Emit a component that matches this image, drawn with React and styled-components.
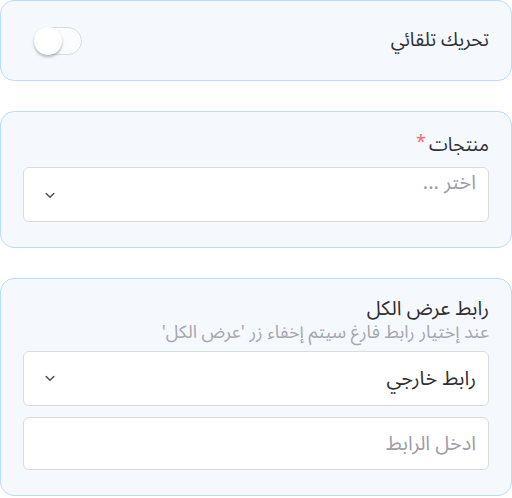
import React from "react";
import styled, { createGlobalStyle } from "styled-components";

const Global = createGlobalStyle`
  html, body { margin: 0; padding: 0; background: #ffffff; }
  body { font-family: "Noto Sans Arabic", "Noto Sans", sans-serif; }
`;

const Page = styled.div`
  direction: rtl;
  display: flex;
  flex-direction: column;
  gap: 30px;
  width: 512px;
`;

const Card = styled.section`
  background: #f5f9fe;
  border: 1px solid #bcdaf9;
  border-radius: 14px;
  padding: ${(p) => p.$pad || "20px 22px 25px"};
  display: flex;
  flex-direction: ${(p) => (p.$row ? "row" : "column")};
  align-items: ${(p) => (p.$row ? "center" : "stretch")};
  justify-content: space-between;
  height: ${(p) => p.$h || "auto"};
  box-sizing: border-box;
`;

const Label = styled.div`
  font-size: ${(p) => p.$fs || "19px"};
  line-height: ${(p) => p.$lh || "27px"};
  color: #2f2f33;
`;

const Star = styled.span`
  color: #f26b6b;
  font-size: 18px;
  line-height: 0;
  margin-right: 3px;
  vertical-align: 3px;
`;

const Hint = styled.div`
  font-size: 18px;
  line-height: 22px;
  color: #a5a6b0;
  white-space: nowrap;
`;

const Switch = styled.div`
  width: 48px;
  height: 28px;
  border: 1px solid #dcdcdc;
  border-radius: 15px;
  background: #fbfcfd;
  box-sizing: border-box;
  position: relative;
  direction: ltr;
`;

const Knob = styled.div`
  position: absolute;
  left: 0px;
  top: 0px;
  width: 28px;
  height: 28px;
  margin: -1px;
  border-radius: 50%;
  background: #ffffff;
  box-shadow: 0 2px 3px rgba(0, 0, 0, 0.28);
`;

const Field = styled.div`
  background: #ffffff;
  border: 1px solid #dcdcdc;
  border-radius: 6px;
  height: ${(p) => p.$h || "55px"};
  box-sizing: border-box;
  display: flex;
  align-items: ${(p) => p.$align || "center"};
  justify-content: space-between;
  padding: ${(p) => p.$pad || "0 12px 0 21px"};
  margin-top: ${(p) => p.$mt || "0"};
  font-size: 20px;
  line-height: 26px;
  color: ${(p) => (p.$placeholder ? "#9d9ea8" : "#2f2f33")};
`;

const Chevron = styled.svg`
  width: 10px;
  height: 7px;
  flex: none;
  align-self: center;
`;

const Arrow = () => (
  <Chevron viewBox="0 0 10 7">
    <path d="M1.2 1.5 L5 5.2 L8.8 1.5" fill="none" stroke="#4b5563" strokeWidth="1.6" strokeLinecap="round" strokeLinejoin="round" />
  </Chevron>
);

export default function App() {
  return (
    <>
      <Global />
      <Page>
        <Card $row $h="81px" $pad="0 22px 0 33px">
          <Label $lh="27px">تحريك تلقائي</Label>
          <Switch>
            <Knob />
          </Switch>
        </Card>

        <Card>
          <Label>
            منتجات<Star>*</Star>
          </Label>
          <Field $placeholder $align="flex-start" $pad="2px 12px 0 21px" $mt="8px">
            <span>اختر ...</span>
            <Arrow />
          </Field>
        </Card>

        <Card $pad="18px 22px 25px">
          <Label $fs="20px" $lh="24px">رابط عرض الكل</Label>
          <Hint>عند إختيار رابط فارغ سيتم إخفاء زر 'عرض الكل'</Hint>
          <Field $mt="8px">
            <span>رابط خارجي</span>
            <Arrow />
          </Field>
          <Field $placeholder $h="53px" $mt="11px">
            <span>ادخل الرابط</span>
          </Field>
        </Card>
      </Page>
    </>
  );
}
